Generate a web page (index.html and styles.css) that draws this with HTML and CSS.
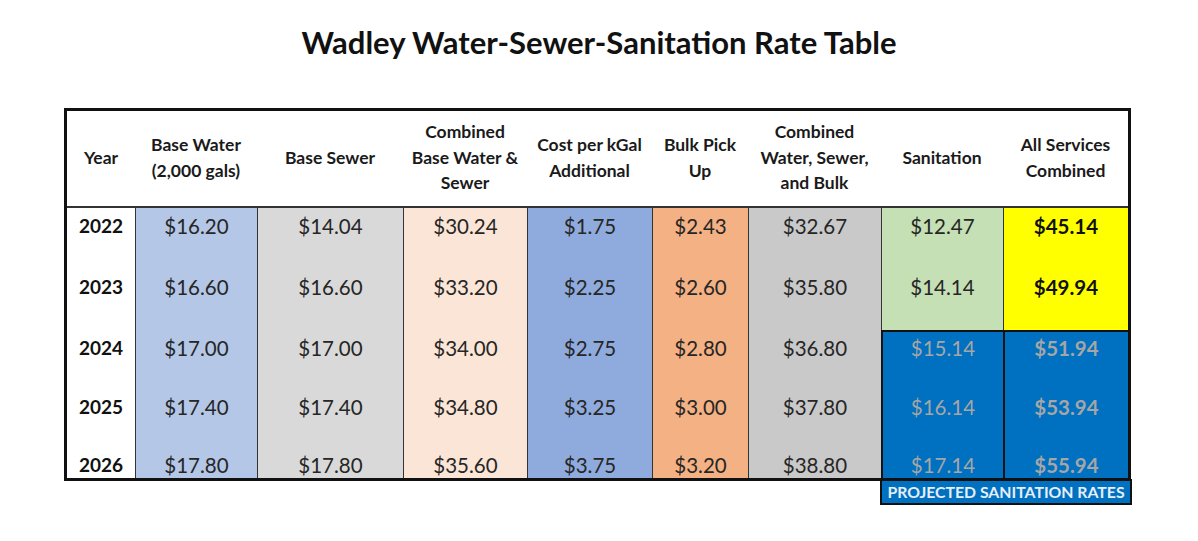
FILE: index.html
```html
<!DOCTYPE html>
<html>
<head>
<meta charset="utf-8">
<link rel="stylesheet" href="styles.css">
</head>
<body>
<div class="page">
  <h1 class="title">Wadley Water-Sewer-Sanitation Rate Table</h1>
  <div class="rate-table">
    <div class="hd">Year</div>
    <div class="hd">Base Water<br>(2,000 gals)</div>
    <div class="hd">Base Sewer</div>
    <div class="hd">Combined<br>Base Water &amp;<br>Sewer</div>
    <div class="hd">Cost per kGal<br>Additional</div>
    <div class="hd">Bulk Pick<br>Up</div>
    <div class="hd">Combined<br>Water, Sewer,<br>and Bulk</div>
    <div class="hd">Sanitation</div>
    <div class="hd">All Services<br>Combined</div>

    <div class="c yr r1">2022</div>
    <div class="c bw r1">$16.20</div>
    <div class="c bs r1">$14.04</div>
    <div class="c cb r1">$30.24</div>
    <div class="c kg r1">$1.75</div>
    <div class="c bk r1">$2.43</div>
    <div class="c cw r1">$32.67</div>
    <div class="c sn r1">$12.47</div>
    <div class="c al r1">$45.14</div>

    <div class="c yr r2">2023</div>
    <div class="c bw r2">$16.60</div>
    <div class="c bs r2">$16.60</div>
    <div class="c cb r2">$33.20</div>
    <div class="c kg r2">$2.25</div>
    <div class="c bk r2">$2.60</div>
    <div class="c cw r2">$35.80</div>
    <div class="c sn r2">$14.14</div>
    <div class="c al r2">$49.94</div>

    <div class="c yr r3">2024</div>
    <div class="c bw r3">$17.00</div>
    <div class="c bs r3">$17.00</div>
    <div class="c cb r3">$34.00</div>
    <div class="c kg r3">$2.75</div>
    <div class="c bk r3">$2.80</div>
    <div class="c cw r3">$36.80</div>
    <div class="c psn r3 first">$15.14</div>
    <div class="c pal r3 first">$51.94</div>

    <div class="c yr r4">2025</div>
    <div class="c bw r4">$17.40</div>
    <div class="c bs r4">$17.40</div>
    <div class="c cb r4">$34.80</div>
    <div class="c kg r4">$3.25</div>
    <div class="c bk r4">$3.00</div>
    <div class="c cw r4">$37.80</div>
    <div class="c psn r4">$16.14</div>
    <div class="c pal r4">$53.94</div>

    <div class="c yr r5">2026</div>
    <div class="c bw r5">$17.80</div>
    <div class="c bs r5">$17.80</div>
    <div class="c cb r5">$35.60</div>
    <div class="c kg r5">$3.75</div>
    <div class="c bk r5">$3.20</div>
    <div class="c cw r5">$38.80</div>
    <div class="c psn r5">$17.14</div>
    <div class="c pal r5">$55.94</div>
  </div>
  <div class="legend-row">
    <div class="legend">PROJECTED SANITATION RATES</div>
  </div>
</div>
</body>
</html>
```

FILE: styles.css
```css
* { box-sizing: border-box; }
html, body { margin: 0; padding: 0; background: #fff; }
body {
  font-family: "Lato", "Liberation Sans", sans-serif;
  color: #262626;
}
.page {
  width: 1198px;
  height: 541px;
  padding: 23px 0 0 64px;
}
.title {
  margin: 0 0 0 -64px;
  width: 1198px;
  text-align: center;
  font-size: 31px;
  font-weight: 700;
  color: #111;
  line-height: 38px;
  height: 85px;
}
.rate-table {
  width: 1067px;
  border: 3px solid #111;
  display: grid;
  grid-template-columns: 68px 122px 146px 124px 125px 96px 133px 122px 125px;
  grid-template-rows: 97px 61px 61px 59px 59px 30px;
}
.hd {
  display: flex;
  align-items: center;
  justify-content: center;
  text-align: center;
  font-weight: 700;
  font-size: 17.5px;
  line-height: 25.5px;
  color: #1a1a1a;
  border-bottom: 2px solid #333;
  padding-bottom: 2px;
  white-space: nowrap;
}
.c {
  text-align: center;
  font-size: 20.5px;
  line-height: 24px;
  padding-top: 6px;
  border-left: 1px solid #333;
  color: #262626;
}
.r5 { padding-top: 5px; }
.yr {
  border-left: none;
  font-weight: 700;
  font-size: 19px;
  color: #111;
}
.bw { background: #b4c7e7; }
.bs { background: #d9d9d9; }
.cb { background: #fbe5d6; }
.kg { background: #8faadc; }
.bk { background: #f4b183; }
.cw { background: #c9c9c9; }
.sn { background: #c5e0b4; }
.al { background: #ffff00; font-weight: 700; color: #111; }
.psn, .pal {
  background: #0070c0;
  color: #a6a6a6;
  border-left: 2px solid #111;
}
.pal { font-weight: 700; }
.first { border-top: 2px solid #111; padding-top: 4px; }
.legend-row {
  display: flex;
  padding-left: 816px;
  margin-top: -2px;
}
.legend {
  width: 252px;
  height: 26px;
  background: #0070c0;
  border: 2px solid #111;
  color: #e6eef8;
  font-weight: 700;
  font-size: 15.8px;
  line-height: 22px;
  text-align: center;
  white-space: nowrap;
}
```
